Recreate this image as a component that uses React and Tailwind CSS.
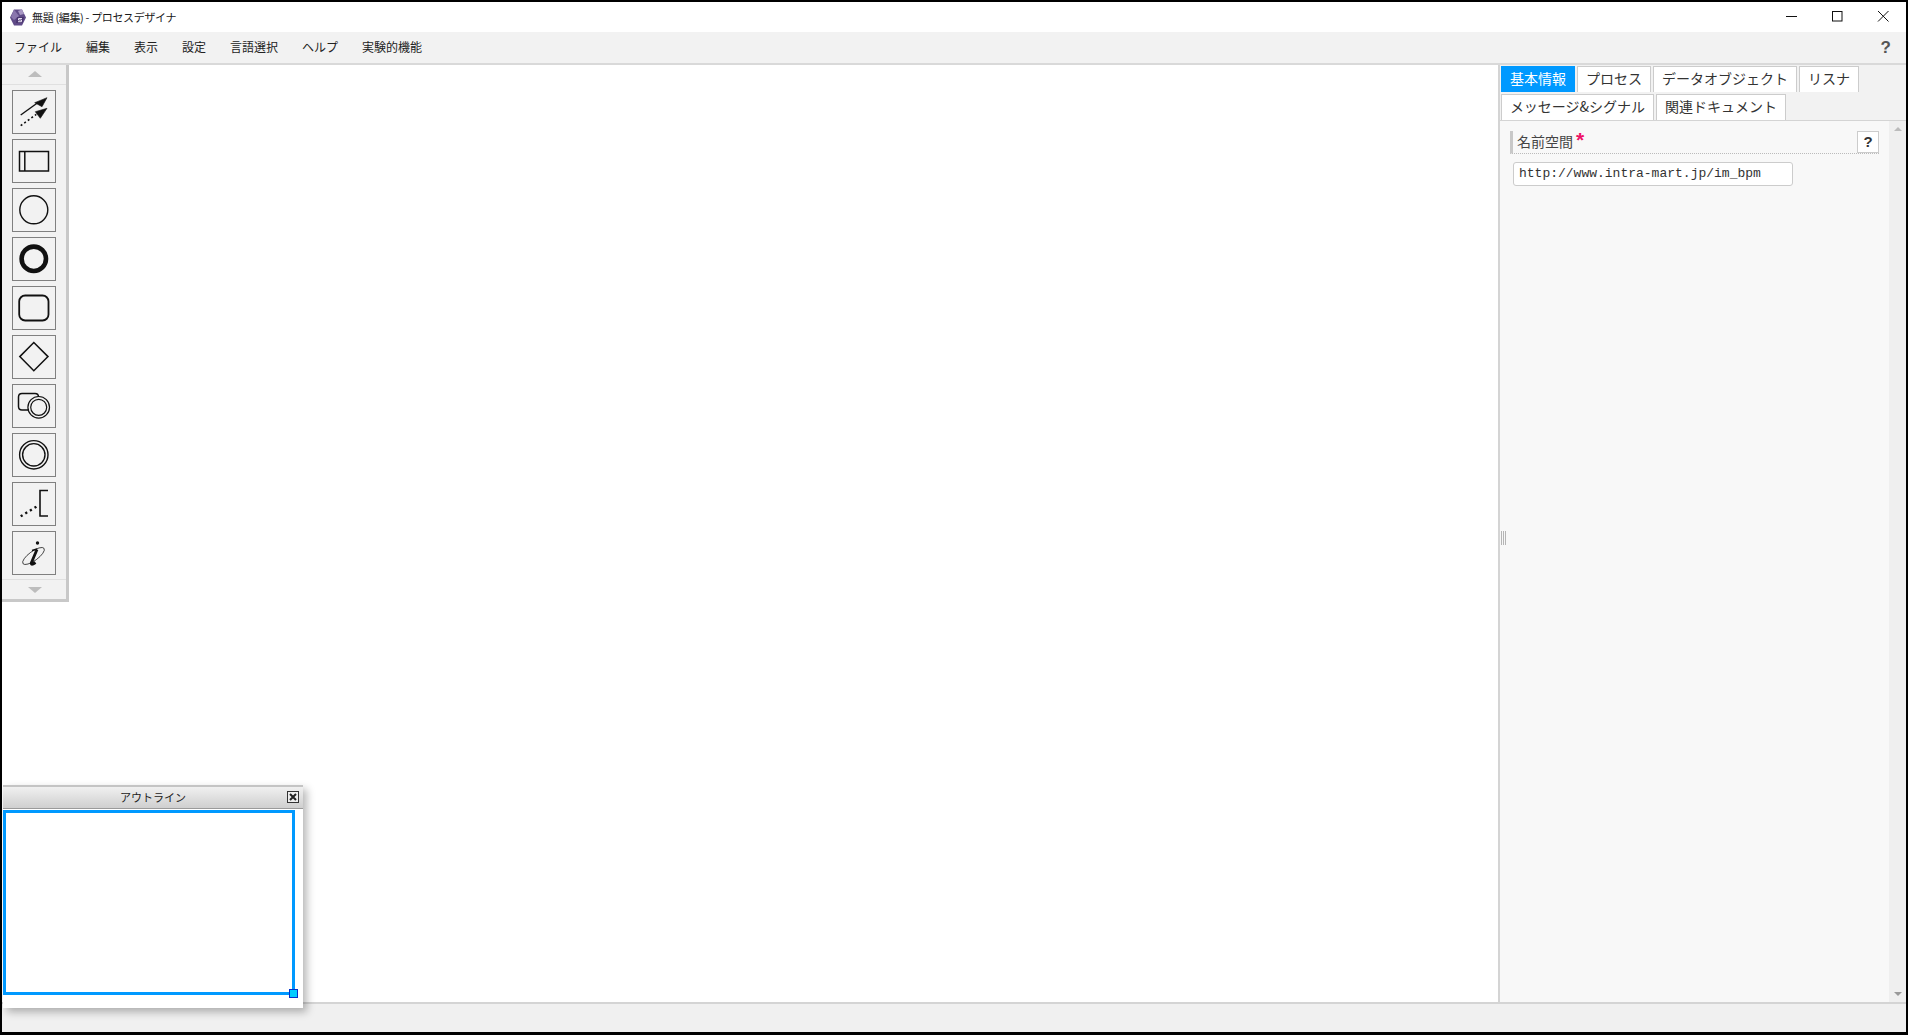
const jp = { fontFamily: '"Noto Sans CJK JP", "Liberation Sans", sans-serif' };

const menus = [
  ["ファイル", "ml-[12px]"],
  ["編集", "ml-[24px]"],
  ["表示", "ml-[24px]"],
  ["設定", "ml-[24px]"],
  ["言語選択", "ml-[24px]"],
  ["ヘルプ", "ml-[24px]"],
  ["実験的機能", "ml-[24px]"],
];

function Ico({ children }) {
  return (
    <button className="w-[44px] h-[44px] border border-[#808080] bg-[#f2f2f2] flex items-center justify-center shrink-0">
      <svg width="34" height="34" viewBox="0 0 34 34" fill="none" stroke="#111">
        {children}
      </svg>
    </button>
  );
}

const icons = [
  <g key="a">
    <path d="M3.7 20 L20 8.3" strokeWidth="1.4" />
    <path d="M17.7 7.7 L30 2.7 L25 11.7 Z" fill="#111" stroke="#111" strokeWidth="0.6" />
    <path d="M3.7 30.7 L19.3 19.3" strokeWidth="1.6" strokeDasharray="2 2.4" />
    <path d="M18.3 16.7 L30 13.3 L23.3 23.3 Z" fill="#111" stroke="#111" strokeWidth="0.6" />
  </g>,
  <g key="b" strokeWidth="1.5">
    <rect x="2.5" y="7.5" width="29" height="19.5" />
    <path d="M7.8 7.5 V27" />
  </g>,
  <circle key="c" cx="16.8" cy="16.8" r="14" strokeWidth="1.4" />,
  <circle key="d" cx="16.8" cy="16.8" r="12.2" strokeWidth="4.6" />,
  <rect key="e" x="2.2" y="4.5" width="29.3" height="25" rx="6" strokeWidth="1.8" />,
  <path key="f" d="M16.8 2.5 L31 16.6 L16.8 30.8 L2.8 16.6 Z" strokeWidth="1.5" />,
  <g key="g" strokeWidth="1.2">
    <path d="M12 21 H5 Q1.5 21 1.5 17.5 V8 Q1.5 4.5 5 4.5 H18 Q21.5 4.5 21.5 8" strokeWidth="1.5" />
    <circle cx="21.7" cy="18.3" r="10.8" />
    <circle cx="21.7" cy="18.3" r="8" />
  </g>,
  <g key="h" strokeWidth="1.4">
    <circle cx="16.8" cy="16.8" r="14.2" />
    <circle cx="16.8" cy="16.8" r="11.2" />
  </g>,
  <g key="i">
    <path d="M31 3.5 H23 V29 H31" strokeWidth="1.6" />
    <path d="M3.7 29.3 L21 18.7" strokeWidth="2.4" strokeDasharray="2.2 3.2" />
  </g>,
  <g key="j">
    <ellipse cx="16.5" cy="20" rx="13" ry="4.6" transform="rotate(-36 16.5 20)" strokeWidth="0.7" />
    <path d="M20 13.5 L14.5 26.5 Q13.5 30 18.5 26.5" strokeWidth="2.8" />
    <path d="M15 14.5 L20 13" strokeWidth="1.4" />
    <circle cx="20.5" cy="7" r="1.7" fill="#111" stroke="none" />
  </g>,
];

function Tab({ label, w, active }) {
  return (
    <div
      className={
        "h-[26px] flex items-center justify-center pb-[2px] text-[14px] whitespace-nowrap border-t border-l border-r " +
        (active ? "bg-[#0099ff] text-white border-[#0099ff]" : "bg-white text-[#333] border-[#ccc]")
      }
      style={{ width: w }}
    >
      {label}
    </div>
  );
}

export default function App() {
  return (
    <div
      className="w-[1908px] h-[1035px] border-t-2 border-l-2 border-r-2 border-b-[3px] border-black bg-white flex flex-col overflow-hidden relative"
      style={jp}
    >
      <div className="h-[30px] shrink-0 flex items-center bg-white">
        <svg width="16" height="17" viewBox="0 0 16 17" className="ml-[8px]">
          <path d="M4 0.5 H12 L16 8.5 L12 16.5 H4 L0 8.5 Z" fill="#5f4a87" />
          <path d="M4 0.5 L1 8 L4 11 L9 7 Z" fill="#8a76ad" />
          <path d="M8 2 L12 0.5 L14 5 L10 6 Z" fill="#a897c4" />
          <path d="M7 8 H14 L12.5 14 H6 Z" fill="#4a3570" />
          <path d="M12 9.5 H8.5 V11 H11.5 V12.7 H8" fill="none" stroke="#e6def0" strokeWidth="1" />
        </svg>
        <span className="ml-[6px] text-[11px] tracking-[-0.35px] text-[#1a1a1a]">無題 (編集) - プロセスデザイナ</span>
        <div className="ml-auto flex items-center h-full">
          <svg width="46" height="30" viewBox="0 0 46 30"><path d="M18 14.5 H29" stroke="#111" /></svg>
          <svg width="46" height="30" viewBox="0 0 46 30"><rect x="18.5" y="9.5" width="9.5" height="9.5" fill="none" stroke="#111" /></svg>
          <svg width="46" height="30" viewBox="0 0 46 30"><path d="M18 9 L28.5 19.5 M28.5 9 L18 19.5" stroke="#111" /></svg>
        </div>
      </div>

      <div className="h-[33px] shrink-0 bg-[#f2f2f2] border-b-2 border-[#d9d9d9] pb-[1px] flex items-center text-[12px] text-[#222] relative z-10">
        {menus.map(([m, c]) => (
          <span key={m} className={c}>{m}</span>
        ))}
        <span className="ml-auto mr-[15px] mt-[1px] text-[17px] font-bold text-[#555]" style={{ fontFamily: '"Liberation Sans", sans-serif' }}>?</span>
      </div>

      <div className="flex-1 flex min-h-0 relative">
        <div className="w-[1496px] shrink-0 bg-white" />

        <div className="absolute left-0 top-0 w-[67px] h-[537px] bg-[#f2f2f2] border-r-[3px] border-b-[3px] border-[#c8c8c8] flex flex-col items-start">
          <div className="h-[20px] w-full border-b border-[#e0e0e0] pb-[2px] pl-[1px] flex items-center justify-center shrink-0">
            <div className="w-0 h-0 border-l-[7px] border-r-[7px] border-b-[6px] border-l-transparent border-r-transparent border-b-[#bdbdbd]" />
          </div>
          <div className="flex flex-col gap-[5px] pl-[10px] pt-[5px]">
            {icons.map((ic, i) => <Ico key={i}>{ic}</Ico>)}
          </div>
          <div className="mt-[4px] flex-1 w-full border-t border-[#e0e0e0] pl-[1px] flex items-center justify-center">
            <div className="w-0 h-0 border-l-[7px] border-r-[7px] border-t-[6px] border-l-transparent border-r-transparent border-t-[#bdbdbd]" />
          </div>
        </div>

        <div className="flex-1 flex flex-col bg-[#f8f8f8] border-l-2 border-[#d4d4d4] min-w-0 relative">
          <div className="absolute left-[1px] top-[466px] flex gap-[1px]">
            <div className="w-[1px] h-[14px] bg-[#b5b5b5]" />
            <div className="w-[1px] h-[14px] bg-[#b5b5b5]" />
            <div className="w-[1px] h-[14px] bg-[#b5b5b5]" />
          </div>
          <div className="bg-[#f2f2f2] pl-[1px] h-[56px] shrink-0 border-b border-[#d4d4d4]">
            <div className="flex gap-[2px] pt-[1px]">
              <Tab label="基本情報" w={74} active />
              <Tab label="プロセス" w={74} />
              <Tab label="データオブジェクト" w={144} />
              <Tab label="リスナ" w={60} />
            </div>
            <div className="flex gap-[2px] pt-[2px]">
              <Tab label="メッセージ&シグナル" w={153} />
              <Tab label="関連ドキュメント" w={130} />
            </div>
          </div>
          <div className="flex-1 flex min-h-0">
            <div className="flex-1 pl-[10px] pr-[10px] pt-[10px]">
              <div className="h-[23px] border-l-[3px] border-[#c8c8c8] border-b border-b-[#bbb] border-dotted flex items-center relative" style={{ borderLeftStyle: "solid" }}>
                <span className="ml-[4px] mb-[2px] text-[14px] text-[#444]">名前空間</span>
                <span className="text-[#ee1166] text-[21px] font-bold ml-[3px] -mt-[5px] leading-none" style={{ fontFamily: '"Liberation Sans", sans-serif' }}>*</span>
                <span className="ml-auto w-[22px] h-[22px] bg-white border border-[#ccc] flex items-center justify-center text-[15px] font-bold text-[#333]" style={{ fontFamily: '"Liberation Sans", sans-serif' }}>?</span>
              </div>
              <div className="ml-[3px] mt-[8px] w-[280px] h-[24px] bg-white border border-[#ccc] rounded-[3px] flex items-center pl-[5px] text-[13px] text-[#333]" style={{ fontFamily: '"Liberation Mono", monospace' }}>
                http://www.intra-mart.jp/im_bpm
              </div>
            </div>
            <div className="w-[17px] shrink-0 bg-[#efefef] flex flex-col items-center justify-between py-[6px]">
              <div className="w-0 h-0 border-l-[4px] border-r-[4px] border-b-[4px] border-l-transparent border-r-transparent border-b-[#bbb]" />
              <div className="w-0 h-0 border-l-[4px] border-r-[4px] border-t-[4px] border-l-transparent border-r-transparent border-t-[#999]" />
            </div>
          </div>
        </div>
      </div>

      <div className="h-[30px] shrink-0 bg-[#f0f0f0] border-t-2 border-[#d4d4d4]" />

      <div className="absolute left-[1px] top-[783px] w-[300px] h-[223px] bg-white border-t-2 border-[#c4c4c4] shadow-[4px_4px_8px_rgba(0,0,0,0.28)] flex flex-col z-20">
        <div className="h-[22px] shrink-0 bg-gradient-to-b from-[#f0f0f0] to-[#cfcfcf] border-b border-[#9a9a9a] flex items-center justify-center pb-[1px] relative text-[11px] text-[#222]">
          アウトライン
          <svg width="12" height="12" viewBox="0 0 12 12" className="absolute right-[4px] top-[4px]">
            <rect x="0.5" y="0.5" width="11" height="11" fill="#eee" stroke="#333" />
            <path d="M3 3 L9 9 M9 3 L3 9" stroke="#222" strokeWidth="2" />
          </svg>
        </div>
        <div className="relative mt-[1px] w-[292px] h-[185px] border-[3px] border-[#0099ff]">
          <div className="absolute right-[-6px] bottom-[-6px] w-[9px] h-[9px] bg-[#00ccff] border border-[#0033cc]" />
        </div>
      </div>
    </div>
  );
}
